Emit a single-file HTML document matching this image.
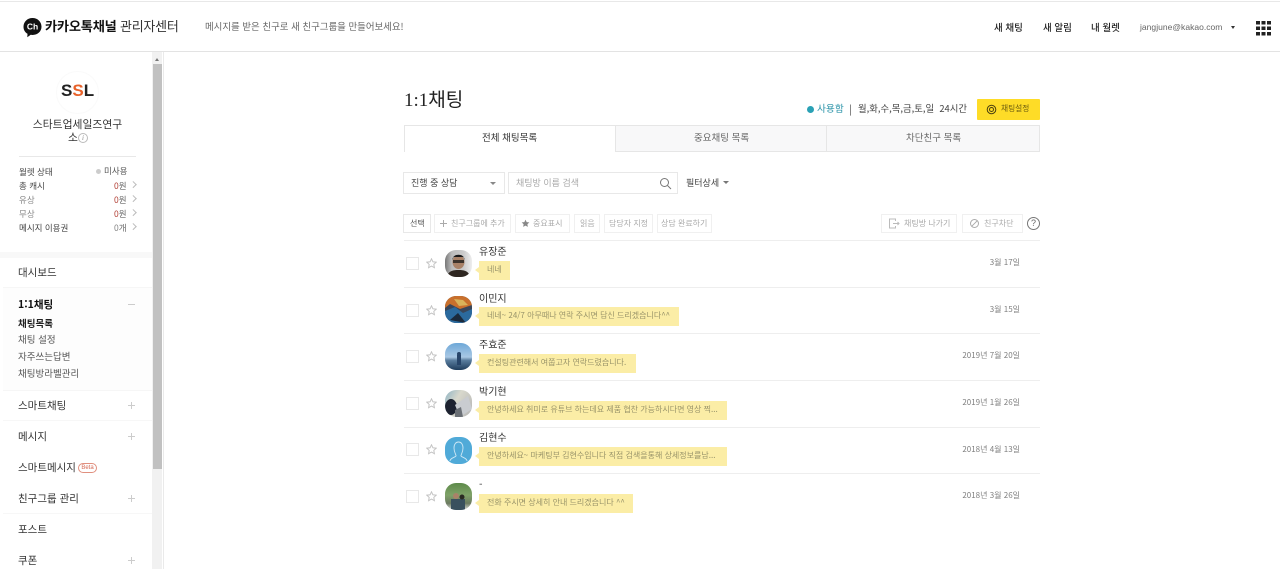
<!DOCTYPE html>
<html lang="ko"><head><meta charset="utf-8"><title>1:1채팅</title>
<style>
html,body{margin:0;padding:0;background:#fff;width:1280px;height:569px;overflow:hidden}
body{font-family:"Noto Sans CJK KR","Liberation Sans",sans-serif;color:#333;position:relative}
.a{position:absolute;white-space:nowrap;line-height:1}
.l{position:absolute;height:1px}
.box{position:absolute;box-sizing:border-box;border:1px solid #e8e8e8;background:#fff}
.btn{position:absolute;box-sizing:border-box;height:19px;top:214px;border:1px solid #f0f0f0;font-size:8px;line-height:17px;color:#aaa;white-space:nowrap}
.nm{position:absolute;left:479px;font-size:10px;line-height:1;color:#333;white-space:nowrap}
.bub{position:absolute;left:479px;height:19px;background:#fbeda6;color:#99946a;font-size:8px;line-height:18px;padding-left:8px;box-sizing:border-box;white-space:nowrap}
.bub:before{content:"";position:absolute;left:-4px;top:6px;border:3.5px solid transparent;border-left:0;border-right:4px solid #fbeda6}
.cb{position:absolute;left:406px;width:13px;height:13px;box-sizing:border-box;border:1px solid #e8e8e8;background:#fff}
.st{position:absolute;left:426px}
.av{position:absolute;left:445px;width:27px;height:27px;border-radius:11px;overflow:hidden}
.dt{position:absolute;right:260px;font-size:8px;line-height:1;color:#808080;white-space:nowrap}
.s1{left:19px;font-size:8.5px;color:#444}
.s2{left:114px;font-size:8.5px;color:#666}
.s2 b{font-weight:400;color:#b5463c}
.ch{position:absolute;left:131px;width:3.5px;height:3.5px;border-top:1px solid #bbb;border-right:1px solid #bbb;transform:rotate(45deg)}
.m{left:18px;font-size:10.5px;color:#333}
.pl{position:absolute;left:128px;width:7px;height:7px;background:linear-gradient(#ccc,#ccc) center/7px 1px no-repeat,linear-gradient(#ccc,#ccc) center/1px 7px no-repeat}
</style></head><body>

<div class="l" style="left:0;top:1px;width:1280px;background:#e8e8e8"></div>
<div class="l" style="left:0;top:51px;width:1280px;background:#e3e3e3"></div>

<svg class="a" style="left:23px;top:17px" width="19" height="21" viewBox="0 0 19 21"><path d="M9.5 1C4.5 1 .5 4.600 .5 9.800c0 3.400 1.700 5.700 4 7l-.2 3.400 3.400-2.400c.6.1 1.200.2 1.800.2 5 0 9-3.400 9-8.200C18.500 4.600 14.500 1 9.500 1z" fill="#111"/><text x="9.500" y="12.500" font-size="8.500" font-weight="700" fill="#fff" text-anchor="middle" font-family="Liberation Sans">Ch</text></svg>
<div class="a" style="left:45px;top:19px;font-size:13.200px;font-weight:700;color:#111;letter-spacing:-.2px">카카오톡채널</div>
<div class="a" style="left:120px;top:19px;font-size:13px;color:#333;letter-spacing:-.25px">관리자센터</div>
<div class="a" style="left:205px;top:22px;font-size:9.450px;color:#666">메시지를 받은 친구로 새 친구그룹을 만들어보세요!</div>

<div class="a" style="left:994px;top:23px;font-size:9.500px;font-weight:500;color:#222">새 채팅</div>
<div class="a" style="left:1043px;top:23px;font-size:9.500px;font-weight:500;color:#222">새 알림</div>
<div class="a" style="left:1091px;top:23px;font-size:9.500px;font-weight:500;color:#222">내 월렛</div>
<div class="a" style="left:1140px;top:23px;font-size:8.500px;color:#666;font-family:'Liberation Sans',sans-serif;letter-spacing:.03px">jangjune@kakao.com</div>
<div class="a" style="left:1231px;top:26px;border:2px solid transparent;border-top:3px solid #333;border-bottom:0"></div>
<svg class="a" style="left:1256px;top:21px" width="15" height="15" fill="#222"><rect width="4" height="3.500"/><rect x="5.500" width="4" height="3.500"/><rect x="11" width="4" height="3.500"/><rect y="5.500" width="4" height="3.500"/><rect x="5.500" y="5.500" width="4" height="3.500"/><rect x="11" y="5.500" width="4" height="3.500"/><rect y="11" width="4" height="3.500"/><rect x="5.500" y="11" width="4" height="3.500"/><rect x="11" y="11" width="4" height="3.500"/></svg>

<!-- sidebar -->
<div class="a" style="left:152px;top:52px;width:10px;height:517px;background:#f1f1f1"></div>
<div class="a" style="left:153px;top:64px;width:9px;height:405px;background:#c1c1c1"></div>
<div class="a" style="left:155px;top:58px;border:2.500px solid transparent;border-bottom:3px solid #777;border-top:0"></div>
<div class="l" style="left:163px;top:52px;width:1px;height:517px;background:#eaeaea"></div>

<div class="a" style="left:56px;top:71px;width:41px;height:41px;border-radius:50%;border:1px solid #fafafa"></div>
<div class="a" style="left:61px;top:82px;font:900 17px/1 'Liberation Sans',sans-serif;color:#222">S<span style="color:#e8622a">S</span>L</div>
<div class="a" style="left:1px;top:118.500px;width:153px;text-align:center;font-size:10.800px;color:#333">스타트업세일즈연구</div>
<div class="a" style="left:68px;top:132px;font-size:10.800px;color:#333">소</div>
<div class="a" style="left:78px;top:133px;width:8px;height:8px;border:1px solid #bbb;border-radius:50%;font:italic 7px/8px 'Liberation Serif',serif;text-align:center;color:#888">i</div>
<div class="l" style="left:19px;top:156px;width:117px;background:#e8e8e8"></div>

<div class="a s1" style="top:168px">월렛 상태</div>
<div class="a" style="left:96px;top:169px;width:5px;height:5px;border-radius:50%;background:#ccc"></div>
<div class="a" style="left:104px;top:167px;font-size:8.500px;color:#555">미사용</div>
<div class="a s1" style="top:182px">총 캐시</div><div class="a s2" style="top:182px"><b>0</b>원</div><i class="ch" style="top:182px"></i>
<div class="a s1" style="top:196px;color:#888">유상</div><div class="a s2" style="top:196px"><b>0</b>원</div><i class="ch" style="top:196px"></i>
<div class="a s1" style="top:210px;color:#888">무상</div><div class="a s2" style="top:210px"><b>0</b>원</div><i class="ch" style="top:210px"></i>
<div class="a s1" style="top:224px">메시지 이용권</div><div class="a s2" style="top:224px"><b style="color:#888">0</b>개</div><i class="ch" style="top:224px"></i>

<div class="a" style="left:0;top:252px;width:152px;height:6px;background:#f8f8f8"></div>
<div class="a m" style="top:268px">대시보드</div>
<div class="a" style="left:3px;top:287px;width:149px;height:102px;background:#fdfdfd;border-top:1px solid #f6f6f6;border-bottom:1px solid #f6f6f6"></div>
<div class="a m" style="top:300px;font-weight:700;color:#111">1:1채팅</div>
<div class="a" style="left:128px;top:304px;width:7px;height:1px;background:#ccc"></div>
<div class="a" style="left:18px;top:319px;font-size:9.500px;font-weight:700;color:#222">채팅목록</div>
<div class="a" style="left:18px;top:335px;font-size:9.500px;color:#555">채팅 설정</div>
<div class="a" style="left:18px;top:352px;font-size:9.500px;color:#555">자주쓰는답변</div>
<div class="a" style="left:18px;top:369px;font-size:9.500px;color:#555">채팅방라벨관리</div>
<div class="a m" style="top:401px">스마트채팅</div><i class="pl" style="top:402px"></i>
<div class="l" style="left:3px;top:420px;width:149px;background:#f7f7f7"></div>
<div class="a m" style="top:432px">메시지</div><i class="pl" style="top:433px"></i>
<div class="a m" style="top:463px">스마트메시지</div>
<div class="a" style="left:78px;top:463px;width:17px;height:8px;border:1px solid #e0907f;border-radius:5px;font:6px/8px 'Liberation Sans',sans-serif;color:#d66a55;text-align:center">Beta</div>
<div class="a m" style="top:494px">친구그룹 관리</div><i class="pl" style="top:495px"></i>
<div class="l" style="left:3px;top:513px;width:149px;background:#f7f7f7"></div>
<div class="a m" style="top:525px">포스트</div>
<div class="a m" style="top:556px">쿠폰</div><i class="pl" style="top:557px"></i>

<!-- main -->
<div class="a" style="left:404px;top:89px;font-size:19px;color:#222;font-family:'Liberation Serif','Noto Sans CJK KR',sans-serif">1:1<span style="font-family:'Noto Sans CJK KR',sans-serif">채팅</span></div>
<div class="a" style="left:807px;top:106px;width:7px;height:7px;border-radius:50%;background:#2aa1b5"></div>
<div class="a" style="left:817px;top:104px;font-size:9.700px;color:#2a93a8">사용함</div>
<div class="a" style="left:849px;top:104px;font-size:10px;color:#444">|</div>
<div class="a" style="left:858px;top:104px;font-size:9.400px;color:#444">월,화,수,목,금,토,일&nbsp; 24시간</div>
<div class="a" style="left:977px;top:99px;width:63px;height:21px;background:#fedc27;border-radius:1px"></div>
<svg class="a" style="left:986px;top:104px" width="11" height="11" viewBox="0 0 11 11" fill="none" stroke="#4a4010"><circle cx="5.500" cy="5.500" r="4.300"/><circle cx="5.500" cy="5.500" r="2"/></svg>
<div class="a" style="left:1001px;top:105px;font-size:7.700px;color:#6b5c10">채팅설정</div>

<!-- tabs -->
<div class="box" style="left:404px;top:125px;width:212px;height:27px;border-color:#e6e6e6;border-bottom:0"></div>
<div class="box" style="left:615px;top:125px;width:212px;height:27px;background:#f8f8f9;border-color:#e6e6e6"></div>
<div class="box" style="left:826px;top:125px;width:214px;height:27px;background:#f8f8f9;border-color:#e6e6e6"></div>
<div class="a" style="left:482px;top:133px;font-size:9.500px;color:#333">전체 채팅목록</div>
<div class="a" style="left:694px;top:133px;font-size:9.500px;color:#666">중요채팅 목록</div>
<div class="a" style="left:906px;top:133px;font-size:9.500px;color:#666">차단친구 목록</div>

<!-- filters -->
<div class="box" style="left:403px;top:172px;width:102px;height:22px"></div>
<div class="a" style="left:411px;top:178px;font-size:9px;color:#444">진행 중 상담</div>
<div class="a" style="left:490px;top:182px;border:3.500px solid transparent;border-top:3.500px solid #888;border-bottom:0"></div>
<div class="box" style="left:508px;top:172px;width:170px;height:22px"></div>
<div class="a" style="left:516px;top:178px;font-size:9px;color:#aaa">채팅방 이름 검색</div>
<svg class="a" style="left:659px;top:177px" width="13" height="13" viewBox="0 0 13 13" fill="none" stroke="#777"><circle cx="5.500" cy="5.500" r="4"/><path d="M8.500 8.500l3.500 3.500"/></svg>
<div class="a" style="left:686px;top:178px;font-size:9px;color:#444">필터상세</div>
<div class="a" style="left:723px;top:181px;border:3px solid transparent;border-top:3px solid #777;border-bottom:0"></div>

<!-- toolbar -->
<div class="btn" style="left:403px;width:28px;border-color:#e8e8e8;color:#555;padding-left:6px">선택</div>
<div class="btn" style="left:434px;width:77px;padding-left:16px">친구그룹에 추가</div>
<svg class="a" style="left:440px;top:220px" width="7" height="7" stroke="#aaa"><path d="M3.500 0v7M0 3.500h7"/></svg>
<div class="btn" style="left:515px;width:55px;padding-left:17px">중요표시</div>
<svg class="a" style="left:521px;top:219px" width="9" height="9" viewBox="0 0 11 11"><path d="M5.500.8l1.400 3 3.300.4-2.400 2.200.6 3.300-2.900-1.600-2.900 1.600.6-3.300L.8 4.200l3.300-.4z" fill="#888"/></svg>
<div class="btn" style="left:574px;width:26px;padding-left:5px">읽음</div>
<div class="btn" style="left:604px;width:49px;padding-left:4px">담당자 지정</div>
<div class="btn" style="left:657px;width:55px;padding-left:3px">상담 완료하기</div>
<div class="btn" style="left:881px;width:76px;padding-left:22px">채팅방 나가기</div>
<svg class="a" style="left:888px;top:218px" width="12" height="11" viewBox="0 0 12 11" fill="none" stroke="#bbb"><path d="M7.500 3V1h-6v9h6V8M5 5.500h6M9.500 4l1.500 1.500L9.500 7"/></svg>
<div class="btn" style="left:962px;width:61px;padding-left:21px">친구차단</div>
<svg class="a" style="left:969px;top:218px" width="11" height="11" viewBox="0 0 11 11" fill="none" stroke="#aaa"><circle cx="5.500" cy="5.500" r="4"/><path d="M2.700 8.300l5.600-5.600"/></svg>
<div class="a" style="left:1027px;top:217px;width:11px;height:11px;border:1px solid #777;border-radius:50%;font-size:9px;line-height:11px;text-align:center;color:#666;font-family:'Liberation Sans',sans-serif">?</div>

<!-- rows -->
<div class="l" style="left:404px;top:240px;width:636px;background:#eee"></div>
<div class="l" style="left:404px;top:287px;width:636px;background:#eee"></div>
<div class="l" style="left:404px;top:333px;width:636px;background:#eee"></div>
<div class="l" style="left:404px;top:380px;width:636px;background:#eee"></div>
<div class="l" style="left:404px;top:427px;width:636px;background:#eee"></div>
<div class="l" style="left:404px;top:473px;width:636px;background:#eee"></div>

<div class="cb" style="top:257px"></div><svg class="st" style="top:258px" width="11" height="11" viewBox="0 0 11 11"><path d="M5.500.8l1.400 3 3.300.4-2.400 2.200.6 3.300-2.900-1.600-2.900 1.600.6-3.300L.8 4.200l3.300-.4z" fill="none" stroke="#c4c4c4"/></svg>
<div class="cb" style="top:304px"></div><svg class="st" style="top:305px" width="11" height="11" viewBox="0 0 11 11"><path d="M5.500.8l1.400 3 3.300.4-2.400 2.200.6 3.300-2.900-1.600-2.900 1.600.6-3.300L.8 4.200l3.300-.4z" fill="none" stroke="#c4c4c4"/></svg>
<div class="cb" style="top:350px"></div><svg class="st" style="top:351px" width="11" height="11" viewBox="0 0 11 11"><path d="M5.500.8l1.400 3 3.300.4-2.400 2.200.6 3.300-2.900-1.600-2.900 1.600.6-3.300L.8 4.200l3.300-.4z" fill="none" stroke="#c4c4c4"/></svg>
<div class="cb" style="top:397px"></div><svg class="st" style="top:398px" width="11" height="11" viewBox="0 0 11 11"><path d="M5.500.8l1.400 3 3.300.4-2.400 2.200.6 3.300-2.900-1.600-2.900 1.600.6-3.300L.8 4.200l3.300-.4z" fill="none" stroke="#c4c4c4"/></svg>
<div class="cb" style="top:443px"></div><svg class="st" style="top:444px" width="11" height="11" viewBox="0 0 11 11"><path d="M5.500.8l1.400 3 3.300.4-2.400 2.200.6 3.300-2.900-1.600-2.900 1.600.6-3.300L.8 4.200l3.300-.4z" fill="none" stroke="#c4c4c4"/></svg>
<div class="cb" style="top:490px"></div><svg class="st" style="top:491px" width="11" height="11" viewBox="0 0 11 11"><path d="M5.500.8l1.400 3 3.300.4-2.400 2.200.6 3.300-2.900-1.600-2.900 1.600.6-3.300L.8 4.200l3.300-.4z" fill="none" stroke="#c4c4c4"/></svg>

<div class="av" style="top:250px;background:linear-gradient(90deg,#777,#bbb 25%,#ccc 70%,#eee)"><svg width="27" height="27"><path d="M2 27c1-6 6-7 11.500-7S24 21 25 27z" fill="#2e2620"/><ellipse cx="13.500" cy="12" rx="6" ry="7" fill="#a98268"/><path d="M7.500 10c-.5-7 12.500-7 12 0l-1-3h-10z" fill="#1a1a1a"/><rect x="8" y="10" width="11" height="3" fill="#1a1a1a" opacity=".75"/></svg></div>
<div class="av" style="top:296px;background:#39465a"><svg width="27" height="27"><path d="M0 0h27v9L15 13 5 8 0 12z" fill="#c9702c"/><path d="M9 3l9 1 5 5-9 1z" fill="#d9b35a"/><path d="M0 15l10-4 8 6 9-4v14H0z" fill="#2b6a9e"/><path d="M5 24l8-7 8 10z" fill="#1b2a3c"/></svg></div>
<div class="av" style="top:343px;background:linear-gradient(#6ea8d8 0,#a9c8e4 52%,#5a7d9e 64%,#1e3c5c 100%)"><svg width="27" height="27"><rect x="12" y="12" width="4" height="10" fill="#27456a"/><circle cx="14" cy="11" r="2" fill="#27456a"/></svg></div>
<div class="av" style="top:390px;background:linear-gradient(120deg,#8fb4c4 0,#d8d8cc 40%,#b5b5b5 100%)"><svg width="27" height="27"><ellipse cx="6" cy="17" rx="6" ry="8" fill="#1d2230"/><path d="M10 15l13-9 4 13-12 8z" fill="#c9ccd0"/><path d="M10 20l6-3 2 10h-8z" fill="#6a6f75"/></svg></div>
<div class="av" style="top:437px;background:#50aad8"><svg width="27" height="27" fill="none" stroke="#cfe8f5" stroke-width=".9"><path d="M5 24c0-3 5-3.500 6-5 .5-1-2-3-2-8 0-4 2-6 4.500-6S18 7 18 11c0 5-2.500 7-2 8 1 1.500 6 2 6 5"/></svg></div>
<div class="av" style="top:483px;background:linear-gradient(#5d8a4a 0,#7fa268 45%,#6b7a60 75%,#ddd 100%)"><svg width="27" height="27"><path d="M6 16h14v11H6z" fill="#39505e"/><circle cx="11" cy="13" r="3" fill="#a98268"/><circle cx="17" cy="14" r="2.500" fill="#2a2a22"/></svg></div>

<div class="nm" style="top:246px">유장준</div><div class="bub" style="top:261px;width:31px">네네</div><div class="dt" style="top:259px">3월 17일</div>
<div class="nm" style="top:293px">이민지</div><div class="bub" style="top:307px;width:200px">네네~ 24/7 아무때나 연락 주시면 답신 드리겠습니다^^</div><div class="dt" style="top:306px">3월 15일</div>
<div class="nm" style="top:339px">주효준</div><div class="bub" style="top:354px;width:157px">컨설팅관련해서 여쭙고자 연락드렸습니다.</div><div class="dt" style="top:352px">2019년 7월 20일</div>
<div class="nm" style="top:386px">박기현</div><div class="bub" style="top:401px;width:248px">안녕하세요 취미로 유튜브 하는데요 제품 협찬 가능하시다면 영상 찍...</div><div class="dt" style="top:399px">2019년 1월 26일</div>
<div class="nm" style="top:432px">김현수</div><div class="bub" style="top:447px;width:248px">안녕하세요~ 마케팅부 김현수입니다 직접 검색을통해 상세정보를남...</div><div class="dt" style="top:446px">2018년 4월 13일</div>
<div class="nm" style="top:479px">-</div><div class="bub" style="top:494px;width:154px">전화 주시면 상세히 안내 드리겠습니다 ^^</div><div class="dt" style="top:492px">2018년 3월 26일</div>

</body></html>
